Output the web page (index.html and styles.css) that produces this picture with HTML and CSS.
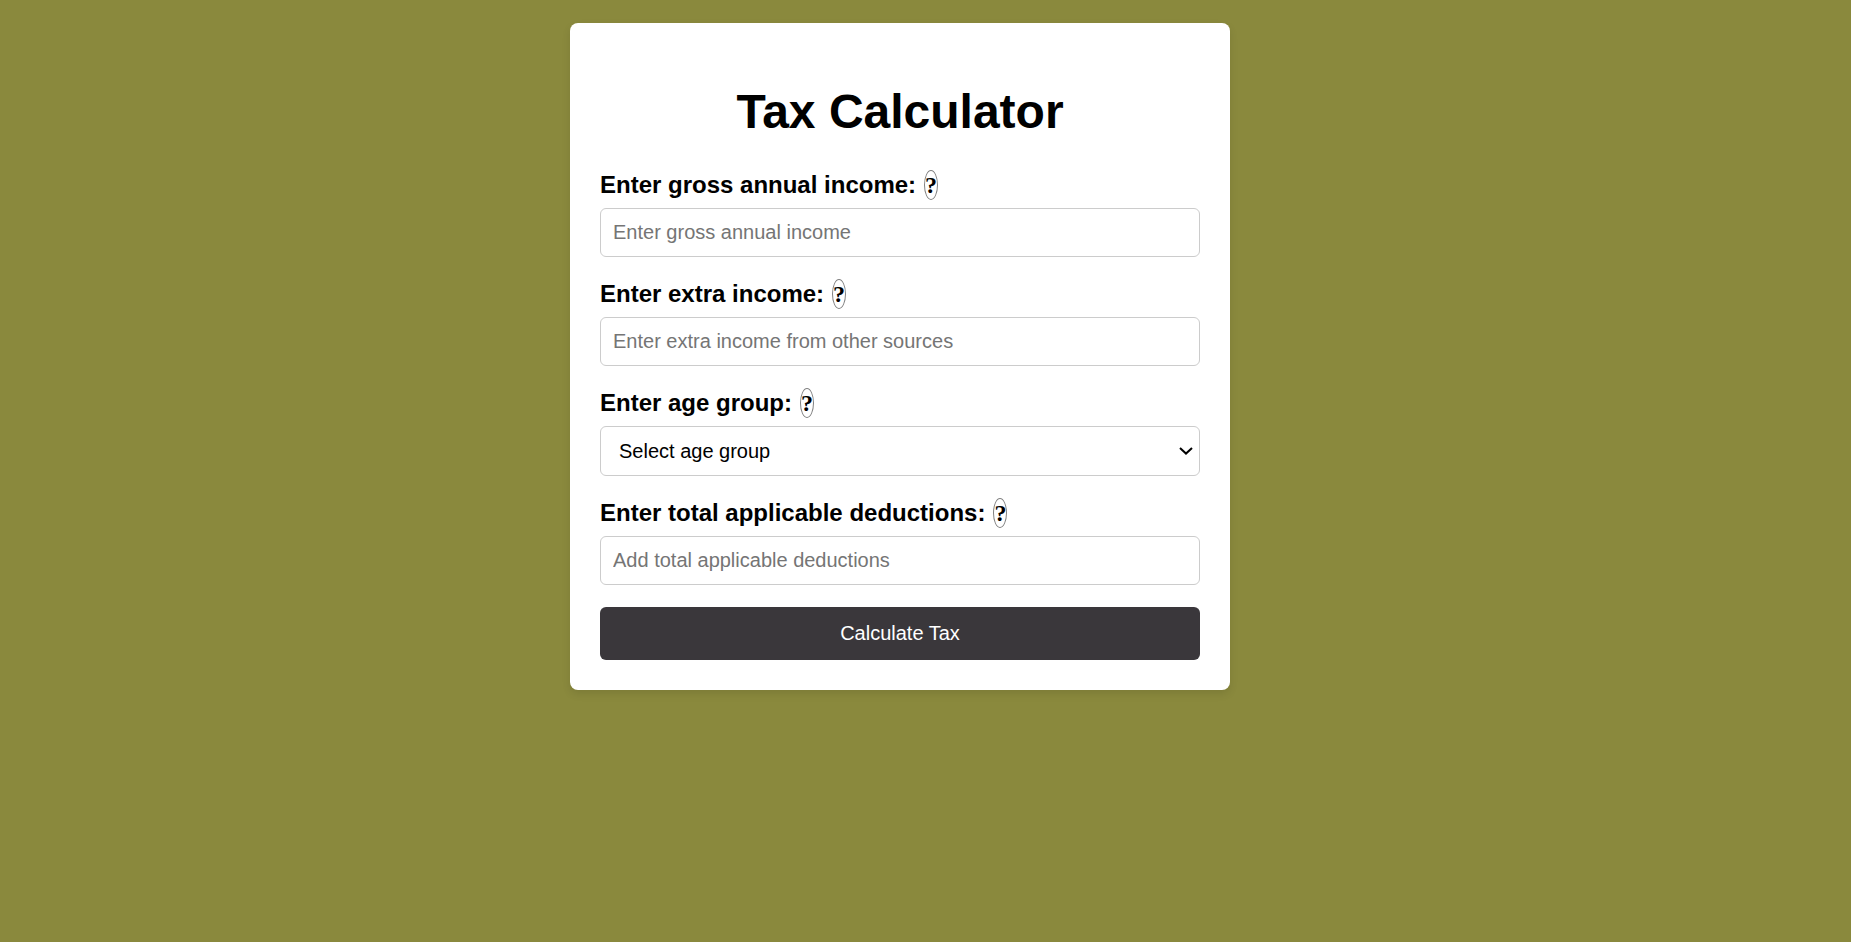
FILE: index.html
```html
<!DOCTYPE html>
<html lang="en">
<head>
<meta charset="utf-8">
<meta name="viewport" content="width=device-width, initial-scale=1">
<title>Tax Calculator</title>
<link rel="stylesheet" href="styles.css">
</head>
<body>
<main class="page">
  <form class="card">
    <h1 class="title">Tax Calculator</h1>
    <div class="field">
      <div class="field-head">
        <label for="income">Enter gross annual income:</label>
        <button class="help" type="button">?</button>
      </div>
      <input class="control" id="income" type="text" placeholder="Enter gross annual income">
    </div>
    <div class="field">
      <div class="field-head">
        <label for="extra">Enter extra income:</label>
        <button class="help" type="button">?</button>
      </div>
      <input class="control" id="extra" type="text" placeholder="Enter extra income from other sources">
    </div>
    <div class="field">
      <div class="field-head">
        <label for="age">Enter age group:</label>
        <button class="help" type="button">?</button>
      </div>
      <div class="select-wrap">
        <select class="control control-select" id="age">
          <option>Select age group</option>
        </select>
        <svg class="chevron" viewBox="0 0 14 8" aria-hidden="true"><path d="M1 1l6 5.6L13 1" fill="none" stroke="#000" stroke-width="2"/></svg>
      </div>
    </div>
    <div class="field">
      <div class="field-head">
        <label for="deductions">Enter total applicable deductions:</label>
        <button class="help" type="button">?</button>
      </div>
      <input class="control" id="deductions" type="text" placeholder="Add total applicable deductions">
    </div>
    <button class="submit" type="submit">Calculate Tax</button>
  </form>
</main>
</body>
</html>
```
FILE: styles.css
```css
* {
  box-sizing: border-box;
}

body {
  margin: 0;
  background: #8a893d;
  color: #000;
  font-family: "Liberation Sans", Arial, sans-serif;
}

.page {
  display: flex;
  justify-content: center;
  padding: 23px 51px 23px 0;
}

.card {
  width: 100%;
  max-width: 660px;
  padding: 30px;
  border-radius: 8px;
  background: #fff;
  box-shadow: 0 4px 8px rgba(0, 0, 0, 0.1);
}

.title {
  margin: 31px 0;
  font-size: 48px;
  line-height: 55px;
  text-align: center;
}

.field {
  margin-bottom: 22px;
}

.field-head {
  display: flex;
  align-items: center;
  gap: 8px;
  margin-bottom: 8px;
  font-size: 24px;
  font-weight: bold;
  line-height: 28px;
}

.help {
  padding: 0;
  border: 1px solid #808080;
  border-radius: 50%;
  background: none;
  color: #000;
  font: bold 24px/28px "Liberation Serif", "Times New Roman", serif;
  cursor: pointer;
}

.control {
  display: block;
  width: 100%;
  padding: 12px;
  border: 1px solid #ccc;
  border-radius: 6px;
  background-color: #fff;
  color: #000;
  font: 20px "Liberation Sans", Arial, sans-serif;
}

.control::placeholder {
  color: #757575;
}

.select-wrap {
  position: relative;
}

.control-select {
  height: 50px;
  padding: 12px 28px 12px 18px;
  appearance: none;
}

.chevron {
  position: absolute;
  top: 21px;
  right: 7px;
  width: 14px;
  height: 8px;
  pointer-events: none;
}

.submit {
  display: block;
  width: 100%;
  padding: 15px;
  border: 0;
  border-radius: 6px;
  background: #3a373b;
  color: #fff;
  font: 20px "Liberation Sans", Arial, sans-serif;
  cursor: pointer;
}
```
